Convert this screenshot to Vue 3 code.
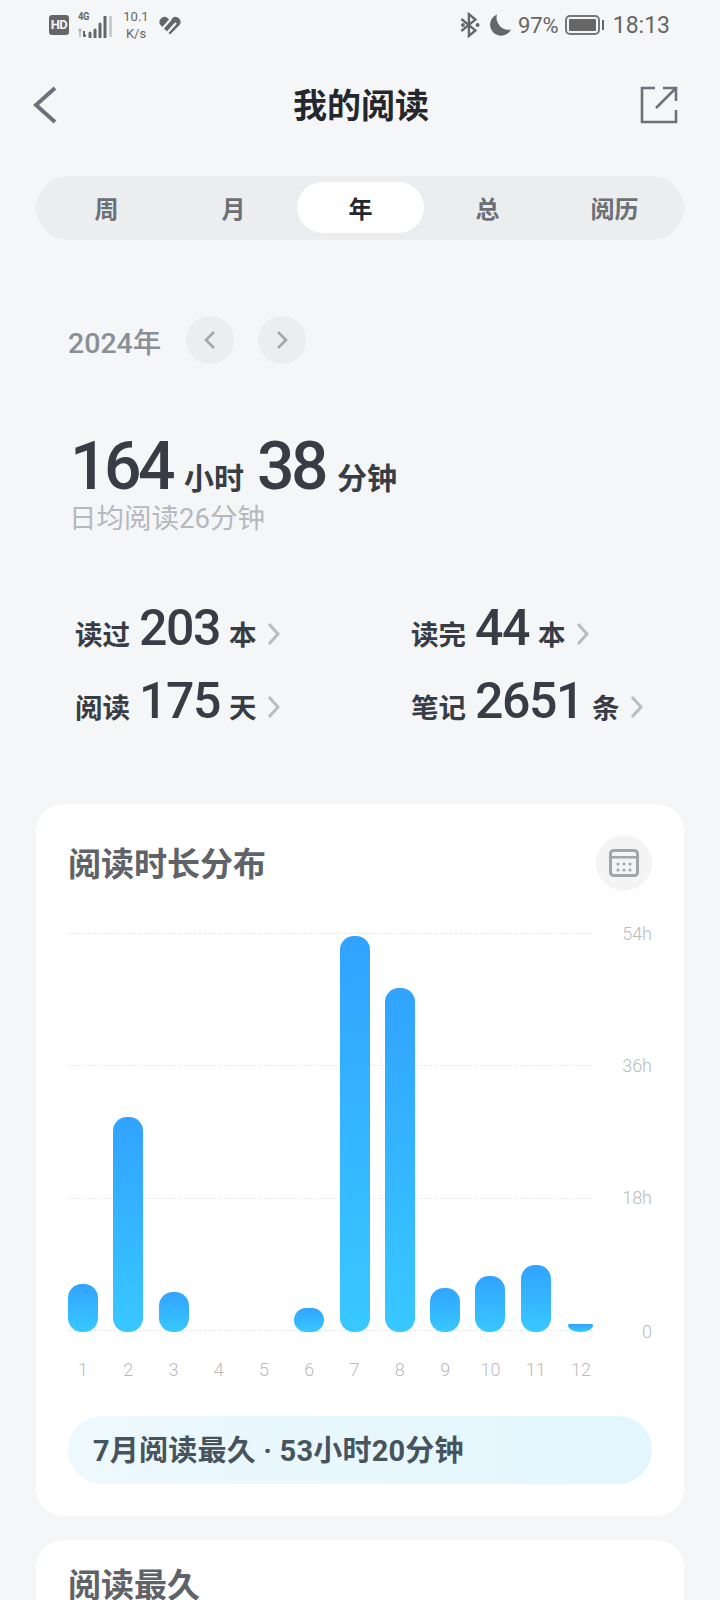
<template>
  <div class="page">
    <div class="status">
      <div class="status-left">
        <span class="hd">HD</span>
        <div class="net">
          <span class="net-type">4G</span>
          <svg class="signal" width="36" height="22" viewBox="0 0 36 22">
            <path d="M3 13v8M1.500 15 3 13 4.500 15" stroke="#b5b5b5" stroke-width="1.500" fill="none" />
            <path d="M7 15v6M7 19l2 1" stroke="#666" stroke-width="2" fill="none" />
            <path d="M13 17v4M18 14v7M23 8v13M28 1v20" stroke="#666" stroke-width="3" fill="none" stroke-linecap="round" />
            <path d="M33.500 0v21" stroke="#c4c4c4" stroke-width="2.500" fill="none" />
          </svg>
        </div>
        <div class="speed"><span>10.1</span><span>K/s</span></div>
        <svg class="heart" width="24" height="20" viewBox="0 0 24 20">
          <path d="M12 19.500 2.500 10a5 5 0 0 1 7-7L12 5.500 14.500 3a5 5 0 0 1 7 7z" fill="#666" />
          <path d="M4 14 13 4M9 18 18 8" stroke="#f4f6f8" stroke-width="2.200" fill="none" />
        </svg>
      </div>
      <div class="status-right">
        <svg width="22" height="26" viewBox="0 0 20 24">
          <path d="M2 6.500 15 17l-6 5V2l6 5L2 17.500" stroke="#666" stroke-width="2.200" fill="none" />
          <circle cx="3.500" cy="12" r="1.800" fill="#666" />
          <circle cx="17" cy="12" r="1.800" fill="#666" />
        </svg>
        <svg class="moon" width="24" height="22" viewBox="0 0 24 22">
          <path d="M9 .500a11 11 0 1 0 14 15 12 12 0 0 1-14-15z" fill="#666" />
        </svg>
        <span class="pct">97%</span>
        <div class="battery"><i></i></div>
        <span class="nub"></span>
        <span class="clock">18:13</span>
      </div>
    </div>

    <div class="header">
      <svg width="24" height="38" viewBox="0 0 24 38">
        <path d="M22 2 3 19l19 17" stroke="#6d727a" stroke-width="4" fill="none" />
      </svg>
      <h1 class="title">我的阅读</h1>
      <svg class="share" width="38" height="38" viewBox="0 0 38 38">
        <path d="M15 2H2v34h34V24" stroke="#6d727a" stroke-width="2.600" fill="none" />
        <path d="M36 2 16 22M23 2h13v13" stroke="#6d727a" stroke-width="2.600" fill="none" />
      </svg>
    </div>

    <div class="tabs">
      <span v-for="tab in tabs" :key="tab" class="tab" :class="{ active: tab === '年' }">{{ tab }}</span>
    </div>

    <div class="year-row">
      <span class="year">2024年</span>
      <span class="round">
        <svg width="14" height="20" viewBox="0 0 14 20"><path d="M11 2 3 10l8 8" stroke="#a3a7ad" stroke-width="2.600" fill="none" /></svg>
      </span>
      <span class="round">
        <svg width="14" height="20" viewBox="0 0 14 20"><path d="m3 2 8 8-8 8" stroke="#a3a7ad" stroke-width="2.600" fill="none" /></svg>
      </span>
    </div>

    <div class="total">
      <span class="big">164</span><span class="big-unit">小时</span>
      <span class="big">38</span><span class="big-unit">分钟</span>
    </div>
    <div class="daily">日均阅读26分钟</div>

    <div class="stats">
      <div v-for="s in stats" :key="s.label" class="stat">
        <span class="stat-label">{{ s.label }}</span>
        <span class="stat-num">{{ s.num }}</span>
        <span class="stat-unit">{{ s.unit }}</span>
        <svg class="stat-arrow" width="13" height="24" viewBox="0 0 13 24"><path d="m2 2 9 10-9 10" stroke="#b9bcc1" stroke-width="3" fill="none" /></svg>
      </div>
    </div>

    <div class="card">
      <div class="card-head">
        <h2 class="card-title">阅读时长分布</h2>
        <span class="cal">
          <svg width="30" height="28" viewBox="0 0 30 28">
            <rect x="1.500" y="1.500" width="27" height="25" rx="3" fill="none" stroke="#a0a4ab" stroke-width="3" />
            <rect x="2" y="7" width="26" height="2.500" fill="#a0a4ab" />
            <g fill="#a0a4ab">
              <circle cx="9" cy="15" r="1.500" /><circle cx="15" cy="15" r="1.500" /><circle cx="21" cy="15" r="1.500" />
              <circle cx="9" cy="21" r="1.500" /><circle cx="15" cy="21" r="1.500" /><circle cx="21" cy="21" r="1.500" />
            </g>
          </svg>
        </span>
      </div>

      <div class="plot">
        <div class="grid">
          <div v-for="g in ['54h', '36h', '18h', '0']" :key="g" class="grid-row">
            <span class="grid-line"></span>
            <span class="grid-label">{{ g }}</span>
          </div>
        </div>
        <div class="bars">
          <div v-for="b in bars" :key="b.m" class="col">
            <div class="bar-slot">
              <span v-if="b.h" class="bar" :class="{ tiny: b.h < 10 }" :style="{ height: b.h + 'px' }"></span>
            </div>
            <span class="month">{{ b.m }}</span>
          </div>
        </div>
      </div>

      <div class="best">7月阅读最久 · 53小时20分钟</div>
    </div>

    <div class="card second">
      <h2 class="card-title">阅读最久</h2>
    </div>
  </div>
</template>

<script setup>
const tabs = ['周', '月', '年', '总', '阅历']

const stats = [
  { label: '读过', num: '203', unit: '本' },
  { label: '读完', num: '44', unit: '本' },
  { label: '阅读', num: '175', unit: '天' },
  { label: '笔记', num: '2651', unit: '条' },
]

const bars = [
  { m: 1, h: 48 },
  { m: 2, h: 215 },
  { m: 3, h: 40 },
  { m: 4, h: 0 },
  { m: 5, h: 0 },
  { m: 6, h: 24 },
  { m: 7, h: 396 },
  { m: 8, h: 344 },
  { m: 9, h: 44 },
  { m: 10, h: 56 },
  { m: 11, h: 67 },
  { m: 12, h: 8 },
]
</script>

<style>
html,
body {
  margin: 0;
  background: #f4f6f8;
}
</style>

<style scoped>
.page {
  width: 720px;
  height: 1600px;
  overflow: hidden;
  background: #f4f6f8;
  font-family: Roboto, "Noto Sans CJK SC", sans-serif;
  color: #373c45;
}

/* status bar */
.status {
  height: 50px;
  padding: 0 50px 0 49px;
  display: flex;
  justify-content: space-between;
  align-items: center;
  color: #666;
}
.status-left,
.status-right {
  display: flex;
  align-items: center;
}
.hd {
  width: 20px;
  height: 20px;
  background: #666;
  color: #f4f6f8;
  border-radius: 3px;
  font-size: 13px;
  font-weight: 700;
  line-height: 20px;
  text-align: center;
  letter-spacing: -0.5px;
}
.net {
  position: relative;
  width: 36px;
  height: 26px;
  margin-left: 7px;
}
.net-type {
  position: absolute;
  left: 2px;
  top: -2px;
  font-size: 11px;
  font-weight: 700;
  letter-spacing: -0.5px;
  transform: scaleX(0.85);
  transform-origin: left;
}
.signal {
  position: absolute;
  left: 1px;
  top: 4px;
}
.speed {
  display: flex;
  flex-direction: column;
  align-items: center;
  width: 30px;
  margin-left: 9px;
  font-size: 13px;
  line-height: 17px;
}
.heart {
  margin-left: 7px;
}
.moon {
  margin-left: 7px;
}
.pct {
  margin-left: 6px;
  font-size: 22px;
}
.battery {
  width: 35px;
  height: 20px;
  margin-left: 6px;
  box-sizing: border-box;
  border: 2px solid #777;
  border-radius: 5px;
  padding: 2px;
}
.battery i {
  display: block;
  height: 100%;
  background: #666;
  border-radius: 1px;
}
.nub {
  width: 2px;
  height: 10px;
  margin-left: 2px;
  background: #666;
}
.clock {
  margin-left: 9px;
  font-size: 23px;
}

/* header */
.header {
  height: 72px;
  margin-top: 19px;
  padding: 0 42px 0 33px;
  display: grid;
  grid-template-columns: 1fr auto 1fr;
  align-items: center;
}
.title {
  margin: -4px 0 0 11px;
  font-size: 34px;
  font-weight: 700;
  color: #24282e;
}
.share {
  justify-self: end;
}

/* tabs */
.tabs {
  width: 648px;
  height: 64px;
  box-sizing: border-box;
  margin: 35px 0 0 36px;
  padding: 0 7px;
  background: #ebedef;
  border-radius: 32px;
  display: grid;
  grid-template-columns: repeat(5, 127px);
  align-items: center;
}
.tab {
  height: 51px;
  line-height: 56px;
  margin-top: -2px;
  text-align: center;
  border-radius: 26px;
  font-size: 24px;
  font-weight: 700;
  color: #6b6f76;
}
.tab.active {
  background: #fff;
  color: #24282e;
}

/* year */
.year-row {
  margin: 76px 0 0 68px;
  display: flex;
  align-items: center;
  gap: 24px;
}
.year {
  width: 94px;
  font-size: 28.500px;
  font-weight: 500;
  color: #8a8f97;
  white-space: nowrap;
}
.round {
  width: 48px;
  height: 48px;
  border-radius: 50%;
  background: #ebedef;
  display: flex;
  align-items: center;
  justify-content: center;
}

/* totals */
.total {
  margin: 64px 0 0 70px;
  display: flex;
  align-items: baseline;
  height: 78px;
}
.big {
  font-size: 66px;
  font-weight: 500;
  line-height: 78px;
  letter-spacing: -3.5px;
}
.big-unit {
  margin: 0 13px 0 12px;
  font-size: 30px;
  font-weight: 700;
}
.daily {
  margin: -7px 0 0 69px;
  font-size: 27.500px;
  line-height: 40px;
  color: #b4b8bf;
}

/* stats */
.stats {
  margin: 60px 0 59px 75px;
  display: grid;
  grid-template-columns: 336px auto;
  grid-auto-rows: 73px;
}
.stat {
  display: flex;
  align-items: baseline;
}
.stat-label,
.stat-unit {
  font-size: 27.500px;
  font-weight: 700;
}
.stat-num {
  margin: 0 9px 0 9px;
  font-size: 50px;
  font-weight: 500;
  letter-spacing: -1.400px;
}
.stat-arrow {
  margin: -4px 0 0 10px;
  align-self: center;
}

/* cards */
.card {
  width: 648px;
  margin-left: 36px;
  box-sizing: border-box;
  padding: 31px 32px 32px 32px;
  background: #fff;
  border-radius: 28px;
}
.card-head {
  display: flex;
  justify-content: space-between;
  align-items: center;
  height: 56px;
}
.card-title {
  margin: -2px 0 0;
  font-size: 33px;
  font-weight: 700;
  color: #5f6369;
}
.cal {
  width: 56px;
  height: 56px;
  border-radius: 50%;
  background: #f4f4f5;
  display: flex;
  align-items: center;
  justify-content: center;
}

/* chart */
.plot {
  position: relative;
  margin-top: 42px;
}
.grid {
  position: absolute;
  left: 0;
  right: 0;
  top: 0;
  height: 398px;
  display: flex;
  flex-direction: column;
  justify-content: space-between;
}
.grid-row {
  height: 1px;
  display: flex;
  align-items: center;
  justify-content: space-between;
}
.grid-line {
  width: 525px;
  border-top: 1px dashed #e8eaed;
}
.grid-label {
  font-size: 18px;
  font-weight: 300;
  line-height: 20px;
  color: #bbb;
}
.grid-row:last-child .grid-label {
  margin-top: 4px;
}
.bars {
  position: relative;
  width: 528px;
  display: flex;
  justify-content: space-between;
}
.col {
  width: 30px;
  display: flex;
  flex-direction: column;
  align-items: center;
}
.bar-slot {
  width: 100%;
  height: 399px;
  display: flex;
  align-items: flex-end;
  justify-content: center;
}
.bar {
  display: block;
  width: 30px;
  border-radius: 14px;
  background: linear-gradient(180deg, #31a3ff, #38c8ff);
}
.bar.tiny {
  width: 25px;
  flex-shrink: 0;
  border-radius: 2px 2px 12px 12px / 1px 1px 7px 7px;
}
.month {
  margin-top: 26px;
  font-size: 18px;
  font-weight: 300;
  line-height: 24px;
  color: #bbb;
}
.best {
  height: 68px;
  margin-top: 34px;
  padding-left: 25px;
  border-radius: 34px;
  background: linear-gradient(90deg, #eef9fd, #e2f6fe);
  font-size: 29px;
  font-weight: 700;
  line-height: 70px;
  color: #47545e;
  letter-spacing: 0.2px;
}
.second {
  margin-top: 24px;
  padding-top: 21px;
  height: 200px;
}
</style>
